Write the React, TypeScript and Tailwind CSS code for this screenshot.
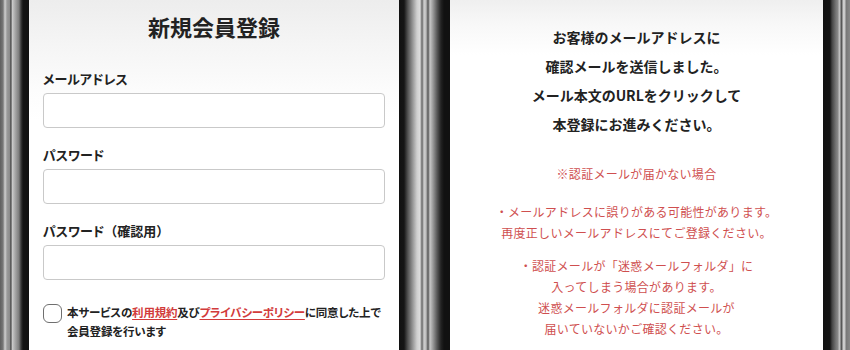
import React from 'react';

const jp = "font-['Noto_Sans_CJK_JP','Noto_Sans',sans-serif]";

const Field: React.FC<{ label: React.ReactNode; first?: boolean }> = ({ label, first }) => (
  <div className={first ? 'mt-[26px]' : 'mt-[17px]'}>
    <p className="mb-[4px] text-[13px] font-bold leading-[20px] text-[#222] [font-feature-settings:'palt']">{label}</p>
    <div className="h-[35px] rounded-[4px] border border-[#c9c9c9] bg-white" />
  </div>
);

const App: React.FC = () => {
  return (
    <div className={`flex h-[350px] w-[850px] overflow-hidden bg-black ${jp}`}>
      {/* left bezel */}
      <div className="w-[29px] shrink-0 bg-[linear-gradient(90deg,#5e5e5e_0px,#777_3px,#d0d0d0_5px,#9a9a9a_7px,#8a8a8a_10px,#2e2e2e_11px,#cfcfcf_12px,#a8a8a8_15px,#7c7c7c_19px,#3a3a3a_21px,#141414_23px,#111_29px)]" />

      {/* registration form */}
      <div className="w-[370px] shrink-0 bg-[linear-gradient(180deg,#ededed_0px,#f5f5f5_45px,#fcfcfc_90px,#fff_120px)] px-[14px]">
        <h1 className="pt-[10px] text-center text-[22px] font-bold leading-[33px] text-[#222]">新規会員登録</h1>
        <Field label="メールアドレス" first />
        <Field label="パスワード" />
        <Field
          label={
            <>
              パスワード<span className="[font-feature-settings:normal]">（確認用）</span>
            </>
          }
        />
        <div className="mt-[23px] flex items-start gap-[5px]">
          <div className="mt-[1px] h-[19px] w-[19px] shrink-0 rounded-[6px] border border-[#6f6f6f] bg-white" />
          <p className="whitespace-nowrap text-[11.5px] font-bold leading-[19px] tracking-[-0.2px] text-[#222] [font-feature-settings:'palt']">
            本サービスの
            <span className="text-[#d23b3b] underline underline-offset-2">利用規約</span>
            及び
            <span className="text-[#d23b3b] underline underline-offset-2">プライバシーポリシー</span>
            に同意した上で
            <br />
            会員登録を行います
          </p>
        </div>
      </div>

      {/* middle bezel */}
      <div className="w-[51px] shrink-0 bg-[linear-gradient(90deg,#111_0px,#141414_5px,#555_9px,#9a9a9a_14px,#cfcfcf_18px,#ddd_21px,#666_23px,#cfcfcf_25px,#bdbdbd_27px,#555_29px,#c8c8c8_31px,#999_34px,#5a5a5a_38px,#222_42px,#111_45px,#111_51px)]" />

      {/* confirmation message */}
      <div className="w-[373px] shrink-0 bg-[linear-gradient(180deg,#efefef_0px,#f8f8f8_25px,#fff_55px)] text-center">
        <div className="pt-[23px] text-[14px] font-bold leading-[29px] text-[#222]">
          <p>お客様のメールアドレスに</p>
          <p>確認メールを送信しました。</p>
          <p>メール本文のURLをクリックして</p>
          <p>本登録にお進みください。</p>
        </div>
        <div className="mt-[24px] text-[12px] leading-[22px] tracking-[0.3px] text-[#cf4f4f]">
          <p>※認証メールが届かない場合</p>
          <div className="mt-[16px] leading-[21px]">
            <p>・メールアドレスに誤りがある可能性があります。</p>
            <p>再度正しいメールアドレスにてご登録ください。</p>
          </div>
          <div className="mt-[12px] leading-[21px]">
            <p>・認証メールが「迷惑メールフォルダ」に</p>
            <p>入ってしまう場合があります。</p>
            <p>迷惑メールフォルダに認証メールが</p>
            <p>届いていないかご確認ください。</p>
          </div>
        </div>
      </div>

      {/* right bezel */}
      <div className="w-[27px] shrink-0 bg-[linear-gradient(90deg,#111_0px,#141414_7px,#444_9px,#777_13px,#8a8a8a_15px,#bbb_16px,#c4c4c4_17px,#555_18px,#5a5a5a_19px,#cfcfcf_20px,#c8c8c8_22px,#777_23px,#888_27px)]" />
    </div>
  );
};

export default App;
